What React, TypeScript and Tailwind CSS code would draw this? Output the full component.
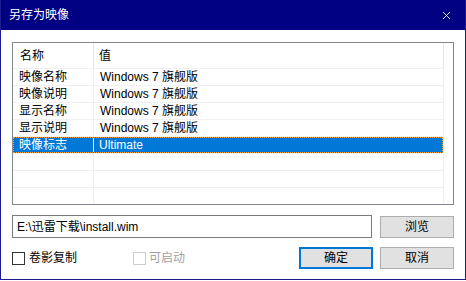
import { X } from "lucide-react";

const rows = [
  ["映像名称", "Windows 7 旗舰版"],
  ["映像说明", "Windows 7 旗舰版"],
  ["显示名称", "Windows 7 旗舰版"],
  ["显示说明", "Windows 7 旗舰版"],
  ["映像标志", "Ultimate"],
];

const font = { fontFamily: '"Liberation Sans", "Noto Sans CJK SC", sans-serif' };

export default function App() {
  return (
    <div
      style={font}
      className="w-[466px] h-[281px] bg-white text-[12px] text-black overflow-hidden"
    >
      <div className="w-[466px] h-[280px] flex flex-col border-l border-r border-b border-[#1c1c8e]">
        <div className="h-[30px] bg-[#000082] flex items-center justify-between pl-[8px] pr-[12px] text-white">
          <span className="text-[12px]">另存为映像</span>
          <X size={13} strokeWidth={1.6} />
        </div>

        <div className="flex-1 flex flex-col px-[11px] pt-[12px]">
          <div className="h-[163px] border border-[#828790] flex flex-col">
            <div className="h-[25px] flex w-[431px]">
              <div className="w-[81px] border-r border-[#e5e5e5] pl-[7px] flex items-center">
                名称
              </div>
              <div className="flex-1 border-r border-[#e5e5e5] pl-[5px] flex items-center">
                值
              </div>
            </div>
            {rows.map(([k, v], i) => {
              const sel = i === rows.length - 1;
              return (
                <div
                  key={k}
                  className="h-[17px] w-[431px] flex border-t border-[#f0f0f0] border-r"
                >
                  {sel ? (
                    <div className="flex-1 flex bg-[#0078d7] text-white border border-dotted border-[#f59a2c]">
                      <div className="w-[80px] border-r border-[#f0f0f0] pl-[5px] flex items-center leading-none">
                        {k}
                      </div>
                      <div className="flex-1 pl-[5px] flex items-center leading-none">
                        {v}
                      </div>
                    </div>
                  ) : (
                    <>
                      <div className="w-[81px] border-r border-[#f0f0f0] pl-[6px] flex items-center leading-none">
                        {k}
                      </div>
                      <div className="flex-1 pl-[6px] flex items-center leading-none">
                        {v}
                      </div>
                    </>
                  )}
                </div>
              );
            })}
            {[0, 1, 2].map((i) => (
              <div
                key={i}
                className="h-[17px] w-[431px] flex border-t border-[#f0f0f0] border-r"
              >
                <div className="w-[81px] border-r border-[#f0f0f0]" />
                <div className="flex-1" />
              </div>
            ))}
          </div>

          <div className="flex items-center justify-between mt-[10px]">
            <div className="w-[360px] h-[23px] border border-[#7a7a7a] flex items-center pl-[4px]">
              E:\迅雷下载\install.wim
            </div>
            <button className="w-[74px] h-[22px] bg-[#e1e1e1] border border-[#adadad] flex items-center justify-center">
              浏览
            </button>
          </div>

          <div className="flex items-center mt-[9px] h-[22px]">
            <div className="flex items-center gap-[4px] w-[121px]">
              <div className="w-[13px] h-[13px] border border-[#333333] bg-white" />
              <span>卷影复制</span>
            </div>
            <div className="flex items-center gap-[3px] text-[#a0a0a0]">
              <div className="w-[13px] h-[13px] border border-[#cccccc] bg-white" />
              <span>可启动</span>
            </div>
            <div className="flex-1" />
            <button className="w-[74px] h-[22px] bg-[#e1e1e1] border-2 border-[#0078d7] flex items-center justify-center mr-[7px]">
              确定
            </button>
            <button className="w-[74px] h-[22px] bg-[#e1e1e1] border border-[#adadad] flex items-center justify-center">
              取消
            </button>
          </div>
        </div>
      </div>
    </div>
  );
}
